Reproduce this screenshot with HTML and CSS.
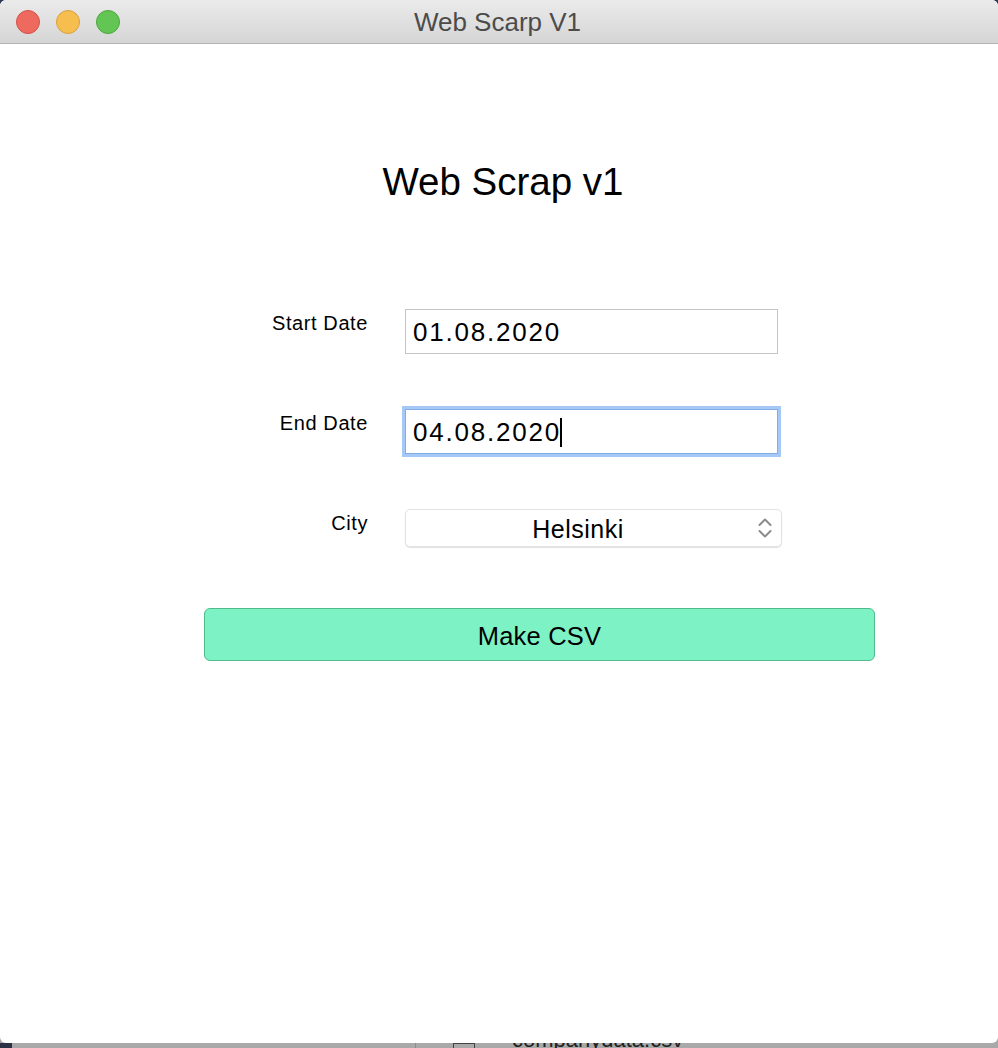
FILE: index.html
```html
<!DOCTYPE html>
<html>
<head>
<meta charset="utf-8">
<title>Web Scrap V1</title>
<link rel="stylesheet" href="styles.css">
</head>
<body>
<div class="window">
  <div class="titlebar">
    <div class="lights">
      <span class="light red"></span>
      <span class="light yellow"></span>
      <span class="light green"></span>
    </div>
    <div class="wintitle">Web Scarp V1</div>
  </div>
  <div class="content">
    <h1 class="heading">Web Scrap v1</h1>
    <div class="form">
      <div class="label">Start Date</div>
      <div class="field">01.08.2020</div>
      <div class="label">End Date</div>
      <div class="field focused">04.08.2020<span class="caret"></span></div>
      <div class="label">City</div>
      <div class="select">
        <span class="select-text">Helsinki</span>
        <svg class="chevrons" width="14" height="24" viewBox="0 0 14 24">
          <path d="M1.5 9 L7 3.5 L12.5 9" fill="none" stroke="#8c8c8c" stroke-width="2" stroke-linecap="round" stroke-linejoin="round"/>
          <path d="M1.5 15 L7 20.5 L12.5 15" fill="none" stroke="#8c8c8c" stroke-width="2" stroke-linecap="round" stroke-linejoin="round"/>
        </svg>
      </div>
      <div class="button">Make CSV</div>
    </div>
  </div>
</div>
<div class="dock-strip">
  <span class="strip-dark"></span>
  <span class="strip-divider"></span>
  <span class="strip-icon"></span>
  <span class="strip-text">companydata.csv</span>
</div>
</body>
</html>
```
FILE: styles.css
```css
html, body {
  margin: 0;
  padding: 0;
}
body {
  width: 998px;
  height: 1048px;
  overflow: hidden;
  background: linear-gradient(#2f3852 0, #2f3852 50%, #a7a7a7 50%, #a7a7a7 100%);
  font-family: "Liberation Sans", Arial, sans-serif;
  color: #000;
}
.window {
  height: 1043px;
  background: #fff;
  border-radius: 6px;
  overflow: hidden;
  display: flex;
  flex-direction: column;
}
.titlebar {
  height: 43px;
  flex: none;
  position: relative;
  background: linear-gradient(#ebebeb, #d5d5d5);
  border-bottom: 1px solid #b3b3b3;
  display: flex;
  align-items: center;
  justify-content: center;
}
.lights {
  position: absolute;
  left: 16px;
  top: 10px;
  display: flex;
  gap: 16px;
}
.light {
  width: 24px;
  height: 24px;
  border-radius: 50%;
  box-sizing: border-box;
}
.red { background: #ee6a5e; border: 1px solid #d5514a; }
.yellow { background: #f6be4f; border: 1px solid #d9a13c; }
.green { background: #62c554; border: 1px solid #4ea63d; }
.wintitle {
  font-size: 26px;
  color: #4b4b4b;
  margin-left: -3px;
  margin-top: 2px;
}
.content {
  flex: 1;
}
.heading {
  margin: 115px 0 0 0;
  padding-left: 8px;
  font-weight: normal;
  font-size: 38.5px;
  line-height: 46px;
  text-align: center;
}
.form {
  margin: 104px 0 0 204px;
  display: grid;
  grid-template-columns: 164px 377px;
  column-gap: 37px;
  row-gap: 55px;
  align-items: start;
}
.label {
  font-size: 20px;
  line-height: 24px;
  text-align: right;
  margin-top: 2px;
  letter-spacing: 0.6px;
}
.field {
  width: 373px;
  height: 45px;
  box-sizing: border-box;
  border: 1px solid #c4c4c4;
  padding: 2px 0 0 7px;
  font-size: 26px;
  line-height: 41px;
  letter-spacing: 1.8px;
  display: flex;
  align-items: center;
}
.field.focused {
  border-color: #82aee8;
  box-shadow: 0 0 0 3px #a5c8f6;
}
.caret {
  display: inline-block;
  width: 2px;
  height: 29px;
  background: #000;
  margin-left: -1px;
}
.select {
  height: 38px;
  box-sizing: border-box;
  border-radius: 5px;
  border: 1px solid #e2e2e2;
  box-shadow: 0 1px 1px rgba(0,0,0,0.12);
  display: flex;
  align-items: center;
  position: relative;
  padding-right: 31px;
}
.select-text {
  flex: 1;
  text-align: center;
  font-size: 25px;
  letter-spacing: 0.5px;
  padding-top: 2px;
}
.chevrons {
  position: absolute;
  right: 9px;
  top: 6px;
}
.button {
  grid-column: 1 / span 2;
  width: 671px;
  height: 53px;
  box-sizing: border-box;
  margin-top: 6px;
  background: #7df2c5;
  border: 1.5px solid #52bb8c;
  border-radius: 6px;
  display: flex;
  align-items: center;
  justify-content: center;
  font-size: 25.5px;
  letter-spacing: 0.2px;
  padding-top: 3px;
}
.dock-strip {
  height: 5px;
  display: flex;
  align-items: flex-start;
  position: relative;
  overflow: hidden;
  background: #a9a9a9;
}
.strip-dark {
  width: 12px;
  height: 5px;
  background: #2d3146;
}
.strip-divider {
  position: absolute;
  left: 415px;
  top: 0;
  width: 1px;
  height: 5px;
  background: #8c8c8c;
}
.strip-icon {
  position: absolute;
  left: 453px;
  top: 0;
  width: 22px;
  height: 12px;
  border: 1px solid #444;
  box-sizing: border-box;
}
.strip-text {
  position: absolute;
  left: 512px;
  top: -16px;
  font-size: 22px;
  color: #222;
}
```
